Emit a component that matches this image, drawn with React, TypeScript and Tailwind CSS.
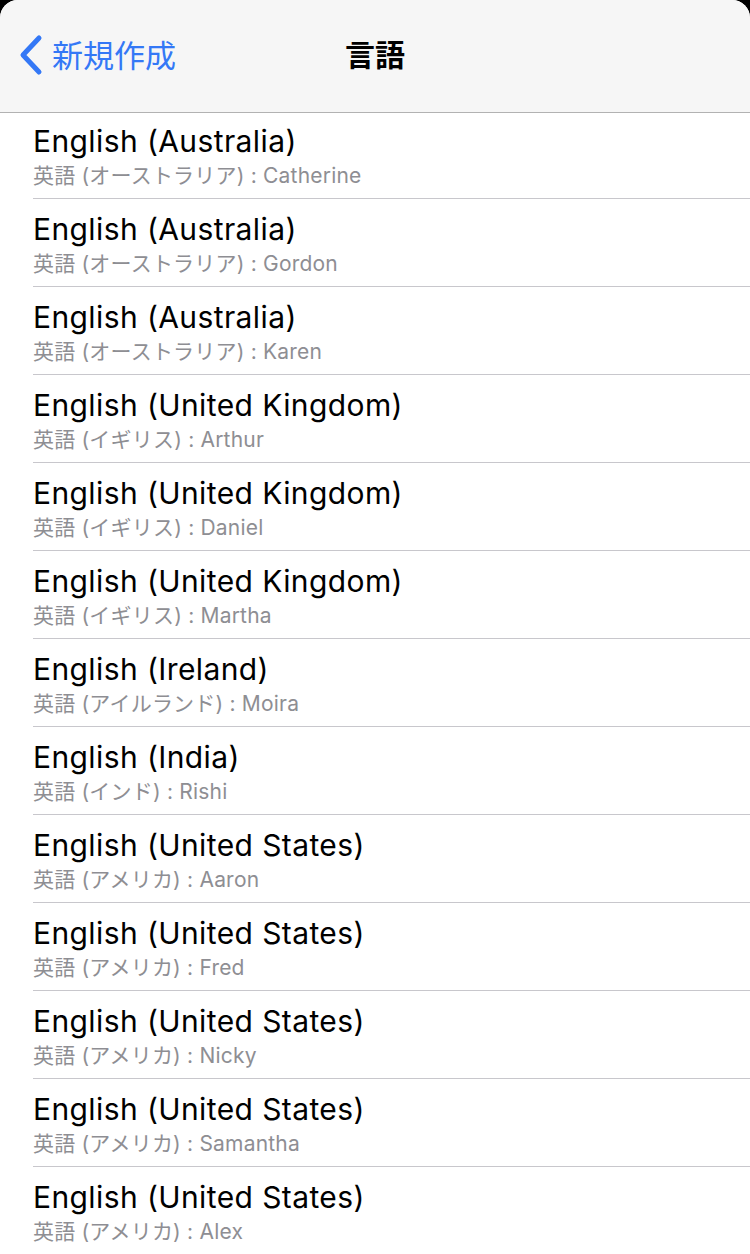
const voices = [
  { en: "English (Australia)", ja: "英語 (オーストラリア) : Catherine" },
  { en: "English (Australia)", ja: "英語 (オーストラリア) : Gordon" },
  { en: "English (Australia)", ja: "英語 (オーストラリア) : Karen" },
  { en: "English (United Kingdom)", ja: "英語 (イギリス) : Arthur" },
  { en: "English (United Kingdom)", ja: "英語 (イギリス) : Daniel" },
  { en: "English (United Kingdom)", ja: "英語 (イギリス) : Martha" },
  { en: "English (Ireland)", ja: "英語 (アイルランド) : Moira" },
  { en: "English (India)", ja: "英語 (インド) : Rishi" },
  { en: "English (United States)", ja: "英語 (アメリカ) : Aaron" },
  { en: "English (United States)", ja: "英語 (アメリカ) : Fred" },
  { en: "English (United States)", ja: "英語 (アメリカ) : Nicky" },
  { en: "English (United States)", ja: "英語 (アメリカ) : Samantha" },
  { en: "English (United States)", ja: "英語 (アメリカ) : Alex" },
];

const font = "font-['Inter','Noto_Sans_CJK_JP',sans-serif]";

function App() {
  return (
    <div className={`bg-black w-[750px] h-[1254px] overflow-hidden ${font}`}>
      <div className="bg-white rounded-t-[18px] h-full overflow-hidden">
        <div className="relative h-[113px] bg-[#f6f6f6] border-b border-[#b2b2b2] flex items-center">
          <div className="flex items-center pl-[18px] text-[#3478f6] -mt-[2px]">
            <svg width="26" height="42" viewBox="0 0 26 42" fill="none">
              <path
                d="M21 4 L5 21 L21 38"
                stroke="#3478f6"
                strokeWidth="5"
                strokeLinecap="round"
                strokeLinejoin="round"
              />
            </svg>
            <span className="ml-[8px] text-[31px] leading-none">新規作成</span>
          </div>
          <div className="absolute left-0 right-0 text-center text-[30px] font-bold text-black leading-none -mt-[2px]">
            言語
          </div>
        </div>
        <div className="-mt-[2px]">
          {voices.map((v, i) => (
            <div key={i} className="pl-[33px]">
              <div className="h-[88px] border-b border-[#c8c7cc] pt-[12px]">
                <div className="text-[30px] leading-[36px] text-black tracking-[0.4px]">{v.en}</div>
                <div className="mt-[4px] text-[21px] leading-[26px] text-[#8e8e93] tracking-[0.2px]">{v.ja}</div>
              </div>
            </div>
          ))}
        </div>
      </div>
    </div>
  );
}

export default App;
